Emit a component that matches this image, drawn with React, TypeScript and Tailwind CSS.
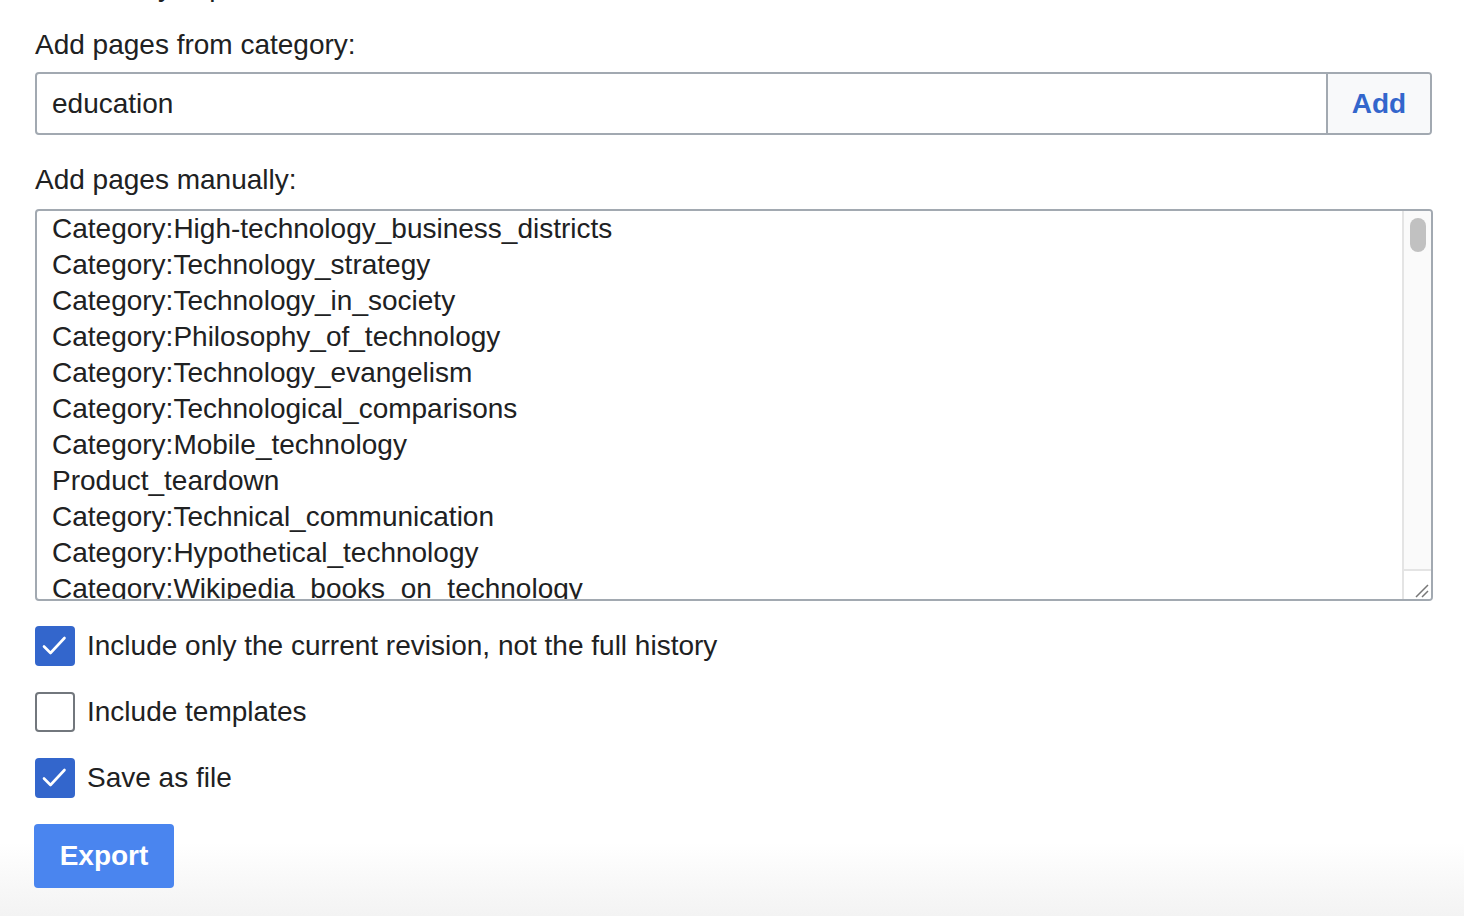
import { useState } from 'react'

const pages = [
  'Category:High-technology_business_districts',
  'Category:Technology_strategy',
  'Category:Technology_in_society',
  'Category:Philosophy_of_technology',
  'Category:Technology_evangelism',
  'Category:Technological_comparisons',
  'Category:Mobile_technology',
  'Product_teardown',
  'Category:Technical_communication',
  'Category:Hypothetical_technology',
  'Category:Wikipedia_books_on_technology',
]

function Check({ checked, onToggle }: { checked: boolean; onToggle: () => void }) {
  return (
    <button
      type="button"
      onClick={onToggle}
      className={`w-[40px] h-[40px] shrink-0 rounded-[4px] flex items-center justify-center ${
        checked ? 'bg-[#3366cc]' : 'bg-white border-2 border-[#72777d]'
      }`}
    >
      {checked && (
        <svg width="40" height="40" viewBox="0 0 40 40" fill="none">
          <path d="M9 20.5 L15.5 27 L29.5 12" stroke="white" strokeWidth="2.6" strokeLinecap="round" strokeLinejoin="round" />
        </svg>
      )}
    </button>
  )
}

export default function App() {
  const [curOnly, setCurOnly] = useState(true)
  const [templates, setTemplates] = useState(false)
  const [asFile, setAsFile] = useState(true)

  return (
    <div className="w-full h-[916px] overflow-hidden px-[35px] font-['Liberation_Sans',Arial,sans-serif] text-[28px] leading-[36px] text-[#202122] bg-linear-to-b from-white from-[92%] to-[#f3f3f3]">
      {/* line scrolled above the top edge */}
      <div className="-mt-[31px] h-[36px] whitespace-nowrap">Select only in plain</div>

      <div className="mt-[22px]">Add pages from category:</div>
      <div className="mt-[9px] w-[1397px] h-[63px] flex border-2 border-[#a2a9b1] rounded-[4px] bg-white overflow-hidden">
        <div className="flex-1 flex items-center pl-[15px]">education</div>
        <button type="button" className="w-[104px] border-l-2 border-[#a2a9b1] bg-[#f8f9fa] font-bold text-[#3366cc]">
          Add
        </button>
      </div>

      <div className="mt-[27px]">Add pages manually:</div>
      <div className="mt-[11px] w-[1398px] h-[392px] flex border-2 border-[#a2a9b1] rounded-[4px] bg-white overflow-hidden">
        <div className="flex-1 overflow-hidden pl-[15px] whitespace-nowrap">
          {pages.map((p) => (
            <div key={p}>{p}</div>
          ))}
        </div>
        <div className="w-[29px] flex flex-col border-l-2 border-[#e4e4e4]">
          <div className="flex-1 bg-[#fafafa] pt-[7px] pl-[6px]">
            <div className="w-[16px] h-[34px] rounded-full bg-[#c1c1c1]" />
          </div>
          <div className="h-[30px] border-t-2 border-[#e4e4e4] bg-white flex items-end justify-end">
            <svg width="18" height="18" viewBox="0 0 18 18" fill="none">
              <path d="M3 16 L15 4 M9 16 L15 10" stroke="#777" strokeWidth="1.5" />
            </svg>
          </div>
        </div>
      </div>

      <div className="mt-[25px] flex flex-col gap-[26px]">
        <label className="flex items-center gap-[12px]">
          <Check checked={curOnly} onToggle={() => setCurOnly(!curOnly)} />
          <span>Include only the current revision, not the full history</span>
        </label>
        <label className="flex items-center gap-[12px]">
          <Check checked={templates} onToggle={() => setTemplates(!templates)} />
          <span>Include templates</span>
        </label>
        <label className="flex items-center gap-[12px]">
          <Check checked={asFile} onToggle={() => setAsFile(!asFile)} />
          <span>Save as file</span>
        </label>
      </div>

      <button type="button" className="mt-[26px] -ml-px w-[140px] h-[64px] rounded-[4px] bg-[#4a85ef] text-white font-bold">
        Export
      </button>
    </div>
  )
}
